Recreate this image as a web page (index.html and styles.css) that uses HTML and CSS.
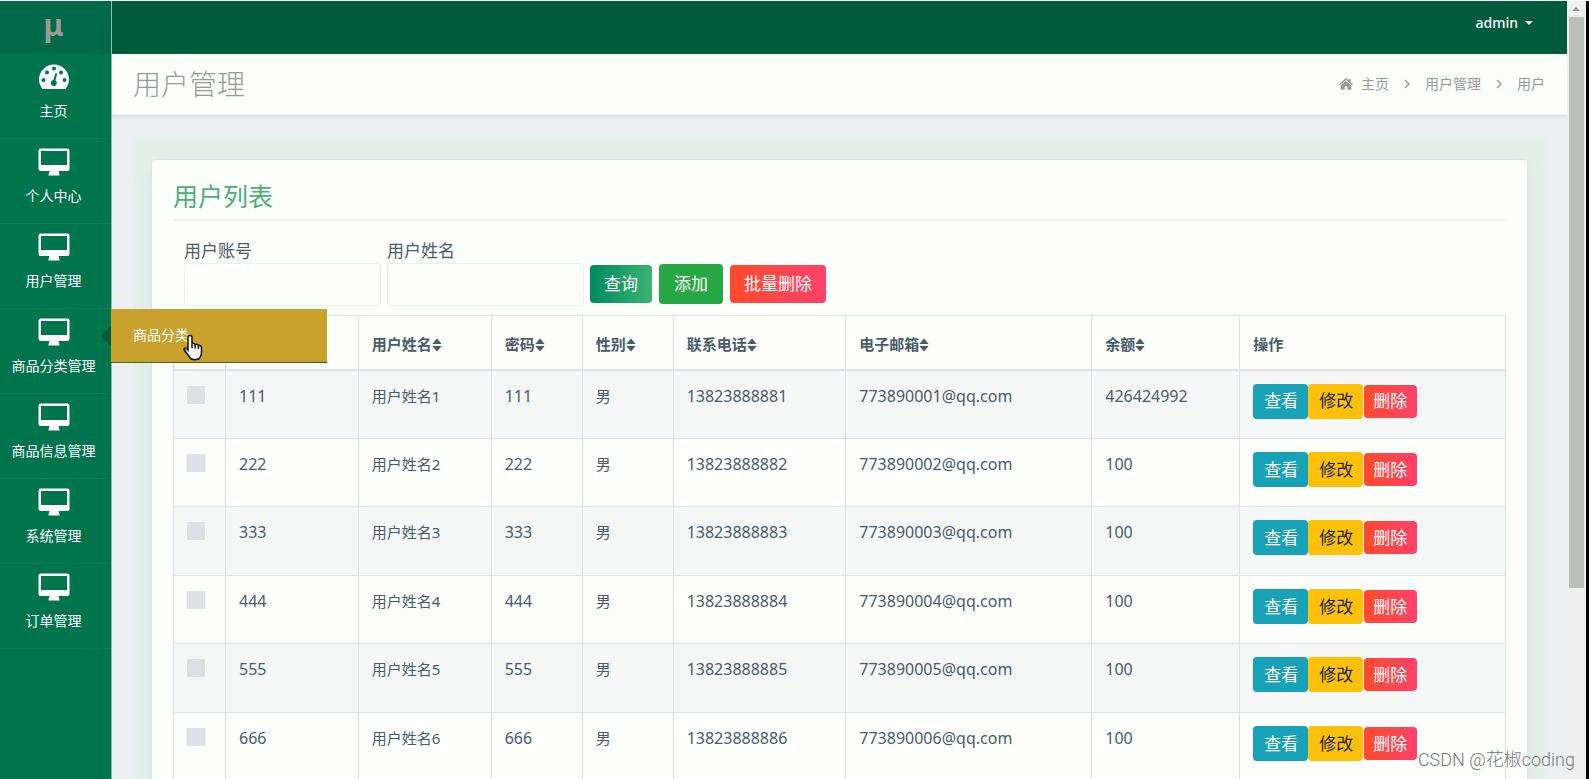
FILE: index.html
```html
<!DOCTYPE html>
<html lang="zh-CN">
<head>
<meta charset="utf-8">
<title>用户管理</title>
<link rel="stylesheet" href="styles.css">
</head>
<body>
<svg class="defs" aria-hidden="true">
  <symbol id="monitor" viewBox="0 0 32 28"><path fill-rule="evenodd" d="M2.500 0.500H29.500A2 2 0 0 1 31.500 2.500V21A2 2 0 0 1 29.500 23H20.500L21.500 26.500V27.500H10.500V26.500L11.500 23H2.500A2 2 0 0 1 0.500 21V2.500A2 2 0 0 1 2.500 0.500ZM3 3V17H29V3Z"/></symbol>
  <symbol id="sort" viewBox="0 0 10 14"><path d="M5 0.500L9.700 6H0.300ZM0.300 8H9.700L5 13.500Z"/></symbol>
</svg>
<div class="app">
  <nav class="sidebar">
    <a class="brand" href="#">μ</a>
    <ul class="menu">
      <li class="menu-item"><a class="menu-link" href="#"><svg class="menu-icon" viewBox="0 0 32 28"><path fill-rule="evenodd" d="M4 25.500A15 15 0 1 1 28 25.500Q27.500 26 26.500 26H5.500Q4.500 26 4 25.500ZM14 5.500a2 2 0 1 0 4 0a2 2 0 1 0-4 0ZM7 9.500a2 2 0 1 0 4 0a2 2 0 1 0-4 0ZM21 9.500a2 2 0 1 0 4 0a2 2 0 1 0-4 0ZM3.500 17a2 2 0 1 0 4 0a2 2 0 1 0-4 0ZM24.500 17a2 2 0 1 0 4 0a2 2 0 1 0-4 0ZM17.500 10L15.400 17.100A3 3 0 1 0 17.500 17.600L19.200 10.500Z"/></svg>主页</a></li>
      <li class="menu-item"><a class="menu-link" href="#"><svg class="menu-icon"><use href="#monitor"/></svg>个人中心</a></li>
      <li class="menu-item"><a class="menu-link" href="#"><svg class="menu-icon"><use href="#monitor"/></svg>用户管理</a></li>
      <li class="menu-item open"><a class="menu-link" href="#"><svg class="menu-icon"><use href="#monitor"/></svg>商品分类管理</a>
        <div class="flyout"><a class="flyout-link" href="#">商品分类</a>
          <svg class="pointer" viewBox="0 0 20 27"><path d="M7 1.500C8.200 1.500 9 2.300 9 3.500V10C9.500 9 12 9.200 12.200 10.700C13 9.900 15.200 10.200 15.400 11.800C16.500 11.100 18.500 11.800 18.500 13.700V19C18.500 21 17.200 22.500 16.500 24.500Q11.500 27 7.500 24.500C6 21.500 2.800 18.500 1.300 16C0.500 14.400 2.400 13.300 3.600 14.400L5 16V3.500C5 2.300 5.800 1.500 7 1.500Z"/><path d="M9 10V14M12.200 11V14.500M15.400 12V15"/></svg>
        </div></li>
      <li class="menu-item"><a class="menu-link" href="#"><svg class="menu-icon"><use href="#monitor"/></svg>商品信息管理</a></li>
      <li class="menu-item"><a class="menu-link" href="#"><svg class="menu-icon"><use href="#monitor"/></svg>系统管理</a></li>
      <li class="menu-item"><a class="menu-link" href="#"><svg class="menu-icon"><use href="#monitor"/></svg>订单管理</a></li>
    </ul>
  </nav>
  <div class="main">
    <header class="topbar"><button class="account" type="button">admin<span class="caret"></span></button></header>
    <div class="page-head">
      <h1 class="page-title">用户管理</h1>
      <div class="crumbs">
        <a class="crumb" href="#"><svg class="home" viewBox="0 0 14 12"><path d="M7 0L9.700 2.300V1H11.700V4.100L14 6.100L13.200 7.200L7 2L0.800 7.200L0 6.100ZM7 2.900L12.200 7.300V11.700H8.300V8.500H5.700V11.700H1.800V7.300Z"/></svg>主页</a>
        <svg class="chevron" viewBox="0 0 6 10"><path d="M1 1L5 5L1 9"/></svg>
        <a class="crumb" href="#">用户管理</a>
        <svg class="chevron" viewBox="0 0 6 10"><path d="M1 1L5 5L1 9"/></svg>
        <span class="crumb">用户</span>
      </div>
    </div>
    <main class="content">
      <section class="card">
        <h2 class="card-title">用户列表</h2>
        <form class="search">
          <div class="field"><label for="account">用户账号</label><input id="account" type="text"></div>
          <div class="field"><label for="name">用户姓名</label><input id="name" type="text"></div>
          <div class="actions">
            <button class="btn query" type="button">查询</button>
            <button class="btn add" type="button">添加</button>
            <button class="btn danger" type="button">批量删除</button>
          </div>
        </form>
        <table class="users">
          <colgroup><col class="c-check"><col class="c-account"><col class="c-name"><col class="c-short"><col class="c-short"><col class="c-phone"><col class="c-mail"><col class="c-balance"><col class="c-ops"></colgroup>
          <thead><tr>
            <th><input type="checkbox" aria-label="全选"></th>
            <th>用户账号<svg class="sort"><use href="#sort"/></svg></th>
            <th>用户姓名<svg class="sort"><use href="#sort"/></svg></th>
            <th>密码<svg class="sort"><use href="#sort"/></svg></th>
            <th>性别<svg class="sort"><use href="#sort"/></svg></th>
            <th>联系电话<svg class="sort"><use href="#sort"/></svg></th>
            <th>电子邮箱<svg class="sort"><use href="#sort"/></svg></th>
            <th>余额<svg class="sort"><use href="#sort"/></svg></th>
            <th>操作</th>
          </tr></thead>
          <tbody>
            <tr><td><input type="checkbox" aria-label="选择 111"></td><td class="num">111</td><td>用户姓名1</td><td class="num">111</td><td>男</td><td class="num">13823888881</td><td class="num">773890001@qq.com</td><td class="num">426424992</td><td><div class="ops"><button class="btn small view" type="button">查看</button><button class="btn small edit" type="button">修改</button><button class="btn small danger" type="button">删除</button></div></td></tr>
            <tr><td><input type="checkbox" aria-label="选择 222"></td><td class="num">222</td><td>用户姓名2</td><td class="num">222</td><td>男</td><td class="num">13823888882</td><td class="num">773890002@qq.com</td><td class="num">100</td><td><div class="ops"><button class="btn small view" type="button">查看</button><button class="btn small edit" type="button">修改</button><button class="btn small danger" type="button">删除</button></div></td></tr>
            <tr><td><input type="checkbox" aria-label="选择 333"></td><td class="num">333</td><td>用户姓名3</td><td class="num">333</td><td>男</td><td class="num">13823888883</td><td class="num">773890003@qq.com</td><td class="num">100</td><td><div class="ops"><button class="btn small view" type="button">查看</button><button class="btn small edit" type="button">修改</button><button class="btn small danger" type="button">删除</button></div></td></tr>
            <tr><td><input type="checkbox" aria-label="选择 444"></td><td class="num">444</td><td>用户姓名4</td><td class="num">444</td><td>男</td><td class="num">13823888884</td><td class="num">773890004@qq.com</td><td class="num">100</td><td><div class="ops"><button class="btn small view" type="button">查看</button><button class="btn small edit" type="button">修改</button><button class="btn small danger" type="button">删除</button></div></td></tr>
            <tr><td><input type="checkbox" aria-label="选择 555"></td><td class="num">555</td><td>用户姓名5</td><td class="num">555</td><td>男</td><td class="num">13823888885</td><td class="num">773890005@qq.com</td><td class="num">100</td><td><div class="ops"><button class="btn small view" type="button">查看</button><button class="btn small edit" type="button">修改</button><button class="btn small danger" type="button">删除</button></div></td></tr>
            <tr><td><input type="checkbox" aria-label="选择 666"></td><td class="num">666</td><td>用户姓名6</td><td class="num">666</td><td>男</td><td class="num">13823888886</td><td class="num">773890006@qq.com</td><td class="num">100</td><td><div class="ops"><button class="btn small view" type="button">查看</button><button class="btn small edit" type="button">修改</button><button class="btn small danger" type="button">删除</button></div></td></tr>
          </tbody>
        </table>
      </section>
    </main>
  </div>
  <div class="scrollbar" aria-hidden="true"><span class="scroll-up"></span><span class="scroll-thumb"></span></div>
  <div class="watermark">CSDN @花椒coding</div>
</div>
</body>
</html>
```
FILE: styles.css
```css
* { box-sizing: border-box; }
body {
  margin: 0;
  font-family: "Noto Sans", "Noto Sans CJK SC", sans-serif;
  font-size: 15px;
  line-height: 24px;
  color: #4b5b69;
  background: #ebeff2;
}
a { color: inherit; text-decoration: none; }
button, input { font: inherit; }
.defs { display: none; }
.app {
  position: relative;
  display: flex;
  height: 100vh;
  overflow: hidden;
  border-top: 1px solid #fcfffc;
}

/* Sidebar */
.sidebar {
  flex: 0 0 112px;
  position: relative;
  z-index: 2;
  background: #00744d;
  border-right: 1px solid #8fc0ac;
  color: #fff;
}
.brand {
  display: flex;
  align-items: center;
  justify-content: center;
  height: 53px;
  padding: 0 4px 6px 0;
  background: #006a48;
  color: #999;
  font-size: 30px;
  font-weight: 700;
}
.menu { list-style: none; margin: 0; padding: 0; }
.menu-item { position: relative; height: 85px; border-bottom: 1px solid #008058; }
.menu-link {
  display: flex;
  flex-direction: column;
  align-items: center;
  gap: 8px;
  padding: 9px 4px 0 0;
  font-size: 14px;
  line-height: 24px;
  white-space: nowrap;
}
.menu-icon { width: 32px; height: 28px; fill: #fff; }
.open::after {
  content: "";
  position: absolute;
  right: 0;
  top: 17px;
  border: 10px solid transparent;
  border-left: 0;
  border-right-color: #005a3c;
}
.flyout {
  position: absolute;
  left: 111px;
  top: 0;
  width: 216px;
  background: #c9a22d;
  border-bottom: 1px solid #3f6a12;
}
.flyout-link { display: block; padding: 14px 22px 15px; font-size: 14px; }
.pointer {
  position: absolute;
  left: 72px;
  top: 25px;
  width: 20px;
  height: 27px;
  fill: #fff;
  stroke: #111;
  stroke-width: 1.5;
}

/* Header */
.main { flex: 1; min-width: 0; }
.topbar {
  display: flex;
  justify-content: flex-end;
  align-items: flex-start;
  height: 53px;
  padding: 10px 34px 0 0;
  background: #005a3c;
}
.account {
  display: flex;
  align-items: center;
  gap: 7px;
  padding: 0;
  border: 0;
  background: none;
  color: #fff;
  font-size: 14px;
  font-weight: 500;
}
.caret { border: 4px solid transparent; border-top-color: #fff; border-bottom: 0; }
.page-head {
  display: flex;
  align-items: center;
  justify-content: space-between;
  height: 62px;
  padding: 0 22px 2px 21px;
  background: #fcfffc;
  border-bottom: 1px solid #d8dce2;
  box-shadow: 0 1px 2px #dfe3e8;
}
.page-title { margin: 0; font-size: 28px; font-weight: 300; line-height: 40px; color: #999; }
.crumbs { display: flex; align-items: center; gap: 15px; font-size: 14px; color: #999; }
.crumb { display: flex; align-items: center; gap: 8px; }
.home { width: 14px; height: 12px; fill: #999; }
.chevron { width: 6px; height: 10px; fill: none; stroke: #999; stroke-width: 1.5; }

/* Content */
.content { margin: 21px 22px 0; padding: 22px 17px; background: #e6f0ea; overflow: hidden; }
.card {
  padding: 21px;
  min-height: 700px;
  background: #fcfffc;
  border: 1px solid #dbe7ea;
  border-radius: 4px;
  box-shadow: 0 8px 20px #d8e6e6;
}
.card-title {
  margin: 0;
  padding-bottom: 8px;
  border-bottom: 2px solid #eff2f1;
  color: #4caf78;
  font-size: 25px;
  font-weight: 400;
  line-height: 30px;
}
.search { display: flex; align-items: flex-end; gap: 6px; padding: 17px 11px 9px; }
.field { display: flex; flex-direction: column; width: 197px; font-size: 17px; line-height: 25px; }
.field input {
  width: 100%;
  height: 43px;
  padding: 0 12px;
  border: 1px solid #e8f3ee;
  border-radius: 4px;
  background: transparent;
}
.actions { display: flex; align-items: center; gap: 7px; height: 45px; }
.btn {
  height: 38px;
  padding: 0 14px;
  border: 0;
  border-radius: 4px;
  color: #fff;
  font-size: 17px;
  line-height: 24px;
  white-space: nowrap;
}
.query { background: linear-gradient(90deg, #008a60, #3cb371); }
.add { height: 40px; padding: 0 15px; background: #28a745; }
.danger { background: linear-gradient(90deg, #ff4b2b, #ff416c); }

/* Table */
.users { width: 100%; table-layout: fixed; border-collapse: collapse; }
.users th, .users td {
  padding: 13px;
  border: 1px solid #dee2e6;
  text-align: left;
  vertical-align: top;
}
.users th { height: 54px; padding: 16px 13px 12px; border-bottom-width: 2px; font-weight: 700; white-space: nowrap; }
.users tbody tr { height: 68px; }
.users tbody tr:nth-child(odd) { height: 69px; background: #f5f8f7; }
.users .num { font-size: 16px; }
.c-check { width: 52px; }
.c-account { width: 10%; }
.c-name { width: 10%; }
.c-short { width: 91px; }
.c-phone { width: 13%; }
.c-mail { width: 246px; }
.c-balance { width: 148px; }
.c-ops { width: 20%; }
.users input {
  display: block;
  appearance: none;
  width: 18px;
  height: 18px;
  margin: 2px 0 0;
  background: #dde1e6;
}
.sort { width: 10px; height: 14px; fill: #4b5b69; vertical-align: -2px; }
.ops { display: flex; align-items: center; height: 35px; }
.small { height: 35px; padding: 0 10px 0 11px; }
.small.danger { height: 33px; margin-left: 1px; padding: 0 10px 0 9px; }
.view { background: #17a2b8; }
.edit { background: #ffc107; color: #212529; }

/* Window edge */
.scrollbar {
  display: flex;
  flex-direction: column;
  flex: 0 0 22px;
  align-items: flex-start;
  gap: 6px;
  padding: 6px 0 0 2px;
  background: #eeefee;
  border-right: 3px solid #000;
}
.scroll-up { margin-left: 3px; border: 4px solid transparent; border-top: 0; border-bottom-color: #999; }
.scroll-thumb { width: 15px; height: 74%; background: #bdbfbc; }
.watermark {
  position: absolute;
  z-index: 3;
  right: 14px;
  bottom: 7px;
  font-family: Roboto, "Noto Sans CJK SC", sans-serif;
  font-size: 18px;
  font-weight: 300;
  color: #777;
  text-shadow: 1px 1px 0 #fff;
}
```
